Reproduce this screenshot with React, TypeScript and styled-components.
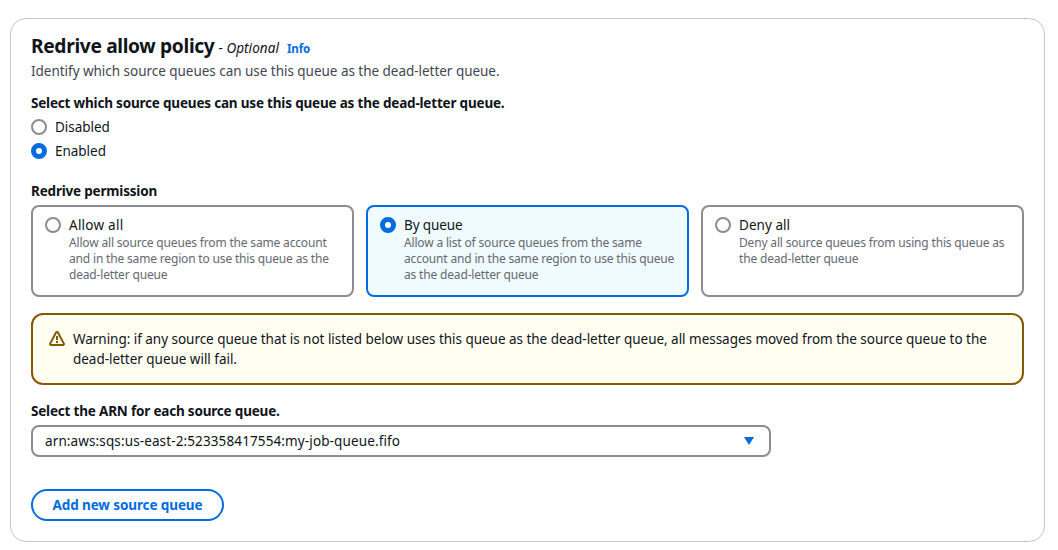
import React, { useState } from "react";
import styled, { createGlobalStyle, css } from "styled-components";

const GlobalStyle = createGlobalStyle`
  * { box-sizing: border-box; }
  body {
    margin: 0;
    background: #fff;
    color: #0f141a;
    font-family: "Noto Sans", "Open Sans", sans-serif;
    font-size: 13.5px;
    line-height: 20px;
    letter-spacing: -0.03px;
  }
`;

const Page = styled.main`
  padding: 18px 13px 8px 10px;
`;

const Container = styled.section`
  height: 524px;
  border: 1px solid #c6c6cd;
  border-radius: 16px;
  padding: 13px 20px 20px;
`;

const Header = styled.header`
  margin-bottom: 12px;
`;

const TitleRow = styled.div`
  display: flex;
  align-items: baseline;
  height: 29px;
  line-height: 28px;
  white-space: pre;
`;

const Title = styled.h2`
  margin: 0;
  font-size: 19.2px;
  font-weight: 700;
  letter-spacing: -0.34px;
`;

const Optional = styled.span`
  margin-left: 4px;
  letter-spacing: 0.05px;
`;

const InfoLink = styled.a`
  margin-left: 8px;
  color: #006ce0;
  font-size: 11.5px;
  font-weight: 700;
  letter-spacing: -0.1px;
  text-decoration: none;
`;

const Description = styled.p`
  margin: 0;
  color: #424650;
`;

const FieldLabel = styled.div`
  font-weight: 700;
  letter-spacing: -0.19px;
  margin-bottom: 4px;
`;

const RadioList = styled.div`
  display: flex;
  flex-direction: column;
  gap: 4px;
  margin-bottom: 20px;
`;

const RadioRow = styled.div`
  display: flex;
  gap: 8px;
  cursor: pointer;
`;

const RadioMark = styled.span<{ $on: boolean }>`
  flex: none;
  width: 16px;
  height: 16px;
  margin-top: 2px;
  border-radius: 50%;
  background: #fff;
  border: ${(p) => (p.$on ? "5px solid #006ce0" : "2px solid #8c8c94")};
`;

const Tiles = styled.div`
  display: grid;
  grid-template-columns: repeat(3, minmax(0, 1fr));
  gap: 12px;
  margin-bottom: 16px;
`;

const Tile = styled.div<{ $on: boolean }>`
  display: flex;
  gap: 8px;
  min-height: 92px;
  padding: 8px 12px 12px;
  border: 2px solid #8c8c94;
  border-radius: 8px;
  cursor: pointer;
  ${(p) =>
    p.$on &&
    css`
      border-color: #006ce0;
      background: #f0fbff;
    `}
`;

const TileText = styled.div`
  white-space: pre;
`;

const TileTitle = styled.div<{ $tracking?: number }>`
  letter-spacing: ${(p) => p.$tracking ?? 0}px;
`;

const TileDescription = styled.div`
  color: #656871;
  font-size: 12px;
  line-height: 16px;
  letter-spacing: -0.17px;
`;

const Alert = styled.div`
  display: flex;
  gap: 8px;
  height: 72px;
  margin-bottom: 16px;
  padding: 14px 16px;
  border: 2px solid #855900;
  border-radius: 12px;
  background: #fffef0;
  white-space: pre;
`;

const AlertIcon = styled.svg`
  flex: none;
  width: 16px;
  height: 16px;
  margin-top: 2px;
`;

const Select = styled.button`
  display: flex;
  align-items: center;
  justify-content: space-between;
  width: 740px;
  height: 32px;
  padding: 0 14px 0 12px;
  border: 2px solid #8c8c94;
  border-radius: 8px;
  background: #fff;
  color: inherit;
  font: inherit;
  letter-spacing: 0.12px;
`;

const Caret = styled.svg`
  width: 12px;
  height: 8px;
`;

const AddButton = styled.button`
  display: block;
  width: 193px;
  height: 32px;
  margin-top: 32px;
  padding: 0;
  border: 2px solid #006ce0;
  border-radius: 20px;
  background: #fff;
  color: #006ce0;
  font: inherit;
  font-weight: 700;
  letter-spacing: -0.1px;
`;

const permissions = [
  {
    title: "Allow all",
    tracking: 0.25,
    text: "Allow all source queues from the same account\nand in the same region to use this queue as the\ndead-letter queue",
  },
  {
    title: "By queue",
    tracking: -0.12,
    text: "Allow a list of source queues from the same\naccount and in the same region to use this queue\nas the dead-letter queue",
  },
  {
    title: "Deny all",
    tracking: 0.05,
    text: "Deny all source queues from using this queue as\nthe dead-letter queue",
  },
];

export default function App() {
  const [mode, setMode] = useState("Enabled");
  const [permission, setPermission] = useState("By queue");

  return (
    <>
      <GlobalStyle />
      <Page>
        <Container>
          <Header>
            <TitleRow>
              <Title>Redrive allow policy</Title>
              <Optional>
                - <i>Optional</i>
              </Optional>
              <InfoLink>Info</InfoLink>
            </TitleRow>
            <Description>
              Identify which source queues can use this queue as the dead-letter queue.
            </Description>
          </Header>

          <FieldLabel>
            Select which source queues can use this queue as the dead-letter queue.
          </FieldLabel>
          <RadioList>
            {["Disabled", "Enabled"].map((name) => (
              <RadioRow key={name} onClick={() => setMode(name)}>
                <RadioMark $on={mode === name} />
                <span>{name}</span>
              </RadioRow>
            ))}
          </RadioList>

          <FieldLabel>Redrive permission</FieldLabel>
          <Tiles>
            {permissions.map((p) => (
              <Tile
                key={p.title}
                $on={permission === p.title}
                onClick={() => setPermission(p.title)}
              >
                <RadioMark $on={permission === p.title} />
                <TileText>
                  <TileTitle $tracking={p.tracking}>{p.title}</TileTitle>
                  <TileDescription>{p.text}</TileDescription>
                </TileText>
              </Tile>
            ))}
          </Tiles>

          <Alert>
            <AlertIcon viewBox="0 0 16 16" fill="none" stroke="#855900" strokeWidth="2">
              <path
                d="M6.9 1.7 1.15 12.6c-.35.67.13 1.4.87 1.4h11.96c.74 0 1.22-.73.87-1.4L9.1 1.7c-.46-.86-1.74-.86-2.2 0Z"
                strokeLinejoin="round"
              />
              <path d="M8 5v4M8 10v2" />
            </AlertIcon>
            <div>
              {
                "Warning: if any source queue that is not listed below uses this queue as the dead-letter queue, all messages moved from the source queue to the\ndead-letter queue will fail."
              }
            </div>
          </Alert>

          <FieldLabel>Select the ARN for each source queue.</FieldLabel>
          <Select>
            <span>arn:aws:sqs:us-east-2:523358417554:my-job-queue.fifo</span>
            <Caret viewBox="0 0 12 8">
              <path d="M1 0h10L6 8Z" fill="#006ce0" />
            </Caret>
          </Select>
          <AddButton>Add new source queue</AddButton>
        </Container>
      </Page>
    </>
  );
}
